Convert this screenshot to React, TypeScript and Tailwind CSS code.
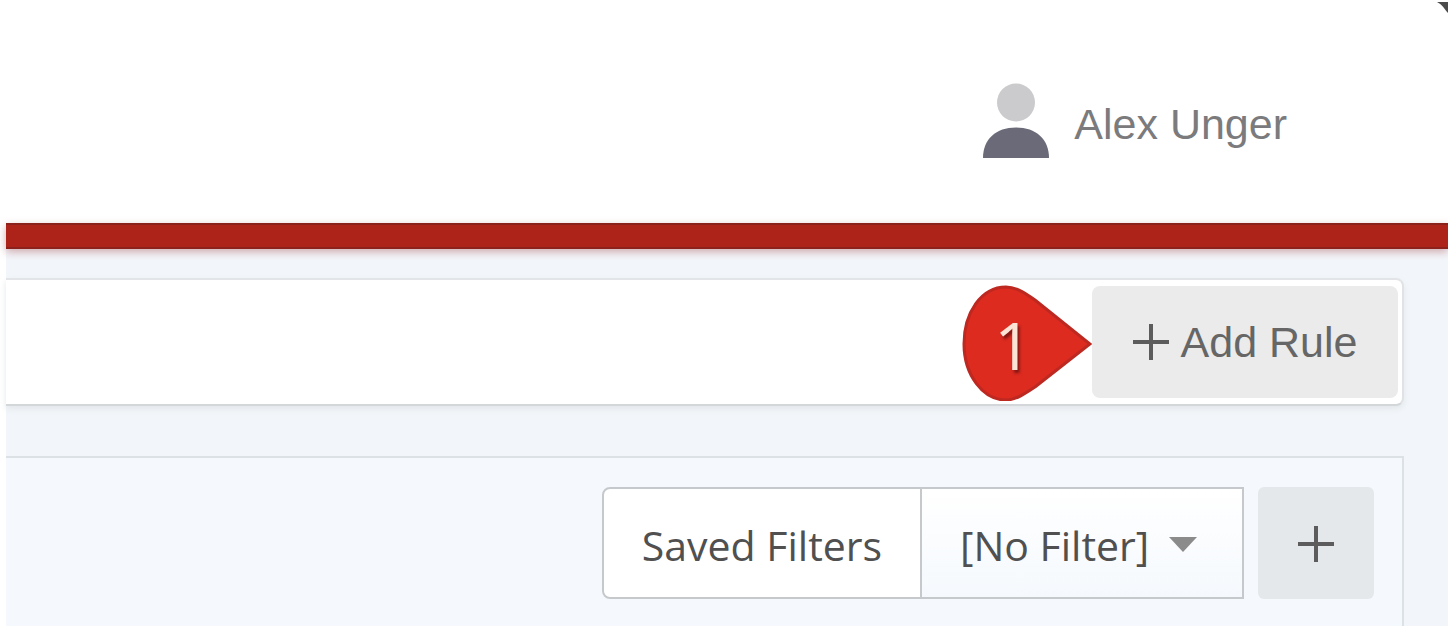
function UserIcon() {
  return (
    <svg width="68" height="76" viewBox="0 0 68 76" aria-hidden="true">
      <circle cx="34" cy="20.500" r="19" fill="#cbcbcd" />
      <path d="M1 76C1 57 14 45.500 34 45.500S67 57 67 76Z" fill="#6a6a78" />
    </svg>
  );
}

function PlusIcon() {
  return (
    <svg width="36" height="36" viewBox="0 0 36 36" fill="none" stroke="#5c5c5c" strokeWidth="4" aria-hidden="true">
      <path d="M18 0V36M0 18H36" />
    </svg>
  );
}

function StepMarker() {
  return (
    <div className="relative flex h-[118px] w-[132px] items-center">
      <svg className="absolute inset-0" width="132" height="118" viewBox="0 0 132 118" aria-hidden="true">
        <path
          d="M46 4C21 4 4 30 4 61S23 117 46 117C56 117 66 110 75 104L130 61L75 17C65 10 56 4 46 4Z"
          fill="#dd2b20"
          stroke="#bd2820"
          strokeWidth="3"
        />
      </svg>
      <span className="relative w-[106px] pt-1 text-center font-['Open_Sans',sans-serif] text-[66px] leading-[66px] text-[#fbe3d6] [text-shadow:2px_3px_3px_#7d1512]">
        1
      </span>
    </div>
  );
}

export default function App() {
  return (
    <div className="flex min-h-screen flex-col overflow-hidden bg-white pl-1.5 font-['Liberation_Sans',Arial,sans-serif]">
      <header className="relative flex h-[223px] items-start justify-end pt-[82px] pr-[161px]">
        <svg className="absolute top-0.5 right-0" width="12" height="12" viewBox="0 0 12 12" aria-hidden="true">
          <path d="M1 0H12V11C9 8 7 3 1 0Z" fill="#4b4b4b" />
        </svg>
        <a href="#profile" className="flex items-center gap-6 text-[43px] leading-[52px] text-[#7b7b7d]">
          <UserIcon />
          <span className="pt-2">Alex Unger</span>
        </a>
      </header>
      <div className="z-10 h-[26px] border-y-2 border-[#8c211c] bg-[#ad2219] shadow-[0_3px_8px_#d0a9ad]" />
      <main className="flex grow flex-col gap-[50px] bg-[#f2f6fa] pt-[29px]">
        <section className="mr-11 flex h-[128px] items-center justify-end rounded-r-lg border-y-2 border-r-2 border-t-[#e3e4e8] border-r-[#e0e3e6] border-b-[#d3d7da] bg-white pr-1 shadow-[0_3px_6px_#e3e7ea]">
          <StepMarker />
          <button
            type="button"
            className="flex h-[112px] w-[306px] items-center justify-center gap-3 rounded-lg bg-[#ebebeb] text-[43px] leading-[52px] text-[#666666]"
          >
            <PlusIcon />
            Add Rule
          </button>
        </section>
        <section className="mr-11 flex grow items-start justify-end border-t-2 border-r-2 border-[#dce1e5] bg-[#f5f9fd] pt-[29px] pr-7 font-['Open_Sans','Noto_Sans',sans-serif] text-[41px] text-[#505050]">
          <div className="flex items-start gap-3.5">
            <div className="flex h-[112px] rounded-l-lg border-2 border-[#c6c9cb] bg-white">
              <label htmlFor="filter" className="flex w-[318px] items-center justify-center border-r-2 border-[#c6c9cb] pt-1.5">
                Saved Filters
              </label>
              <div className="relative flex w-[320px]">
                <select
                  id="filter"
                  className="h-full w-full appearance-none bg-linear-to-b from-white to-[#f5f9fd] pt-1.5 pl-[38px] outline-none"
                >
                  <option>[No Filter]</option>
                </select>
                <svg
                  className="pointer-events-none absolute top-12 right-[45px]"
                  width="28"
                  height="15"
                  viewBox="0 0 28 15"
                  aria-hidden="true"
                >
                  <path d="M0 0H28L14 15Z" fill="#8b8b8b" />
                </svg>
              </div>
            </div>
            <button
              type="button"
              aria-label="Add filter"
              className="flex h-[112px] w-[116px] items-center justify-center rounded-md bg-[#e4e8eb] pt-0.5"
            >
              <PlusIcon />
            </button>
          </div>
        </section>
      </main>
    </div>
  );
}
